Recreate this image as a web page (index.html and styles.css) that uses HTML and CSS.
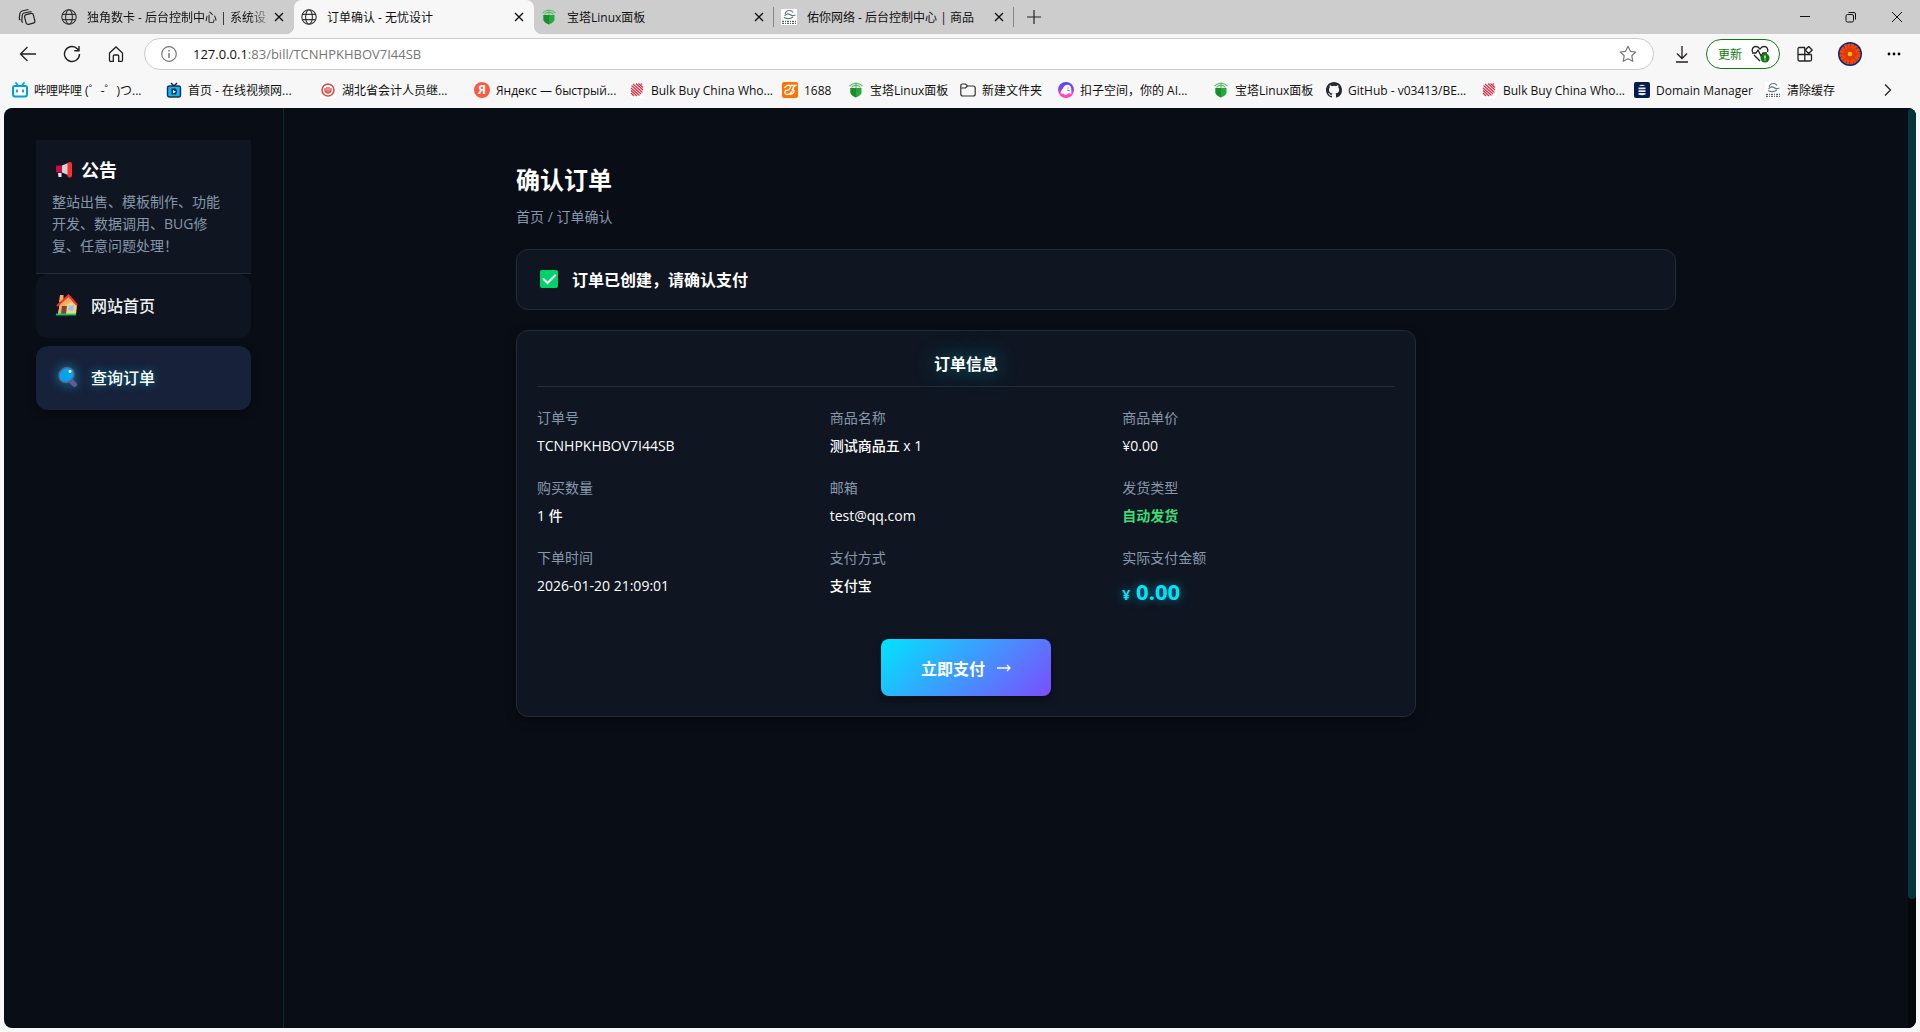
FILE: index.html
```html
<!DOCTYPE html>
<html lang="zh-CN">
<head>
<meta charset="utf-8">
<title>订单确认 - 无忧设计</title>
<link rel="stylesheet" href="styles.css">
</head>
<body>
<svg class="defs" aria-hidden="true">
  <symbol id="globe" viewBox="0 0 16 16"><g fill="none" stroke="#333" stroke-width="1.1"><circle cx="8" cy="8" r="7.2"/><ellipse cx="8" cy="8" rx="3.4" ry="7.2"/><path d="M1.4 5.4h13.2M1.4 10.6h13.2"/></g></symbol>
  <symbol id="close" viewBox="0 0 16 16"><path d="M4 4l8 8M12 4l-8 8" fill="none" stroke="#111" stroke-width="1.4"/></symbol>
  <symbol id="bt" viewBox="0 0 16 16"><path d="M2.500 6H13.500V11Q12.500 13.500 8 15.500Q3.500 13.500 2.500 11Z" fill="#27a83f"/><path d="M8 6V15.500Q3.500 13.500 2.500 11V6Z" fill="#178f2f"/><path d="M1.500 4.200Q4 1.500 8 1.200Q12 1.500 14.500 4.200M3.500 5.500Q5.500 3 8 3.500Q10.500 3 12.500 5.500M8 1v5" fill="none" stroke="#62bd74" stroke-width="1.200"/></symbol>
  <symbol id="yn" viewBox="0 0 16 16"><path fill="#fff" d="M0 0h16v16H0z"/><path d="M4 5Q5 1.500 8.500 1.500Q11 1.500 12 3.500M3.500 7Q6 3.500 9 5.500Q11 7.500 14.500 6M3 8.500Q8 11 12 8" fill="none" stroke="#607786" stroke-width="1.200"/><path d="M1 12.300h14M1 14.300h14" stroke="#56626c" stroke-width="1.200" stroke-dasharray="2 1 1 1"/></symbol>
  <symbol id="bulk" viewBox="0 0 16 16"><rect width="16" height="16" rx="3" fill="#fff"/><path d="M3 2.500l1-1M2 5.500L6.500 1.500M2 8L9 1.500M2.500 10.500L12 2M4 12l9.500-8.500M5.500 13.500L14 6M8 14l6-5.500M11 14l3-3" transform="matrix(-1 0 0 1 16 0)" stroke="#e3213b" stroke-width="1.100"/></symbol>
</svg>

<header class="browser">
  <div class="tabstrip">
    <button class="icon-btn tab-menu" aria-label="标签操作"><svg width="18" height="18" viewBox="0 0 18 18" fill="none" stroke="#222" stroke-width="1.200"><rect x="7" y="6" width="9" height="10" rx="2" transform="rotate(-14 11 10)"/><path d="M5 14.500Q3.500 14 3.800 12L4.300 7Q4.500 5.500 6 5L13.500 3.500M2.500 12Q1 11.500 1.300 9.500L2 5Q2.300 3.500 4 3L10.500 1.500"/></svg></button>
    <div class="tab tab-first"><svg class="fav"><use href="#globe"/></svg><span class="tab-title fade">独角数卡 - 后台控制中心 | 系统设</span><button class="icon-btn" aria-label="关闭"><svg class="fav"><use href="#close"/></svg></button></div>
    <div class="tab active"><svg class="fav"><use href="#globe"/></svg><span class="tab-title">订单确认 - 无忧设计</span><button class="icon-btn" aria-label="关闭"><svg class="fav"><use href="#close"/></svg></button></div>
    <div class="tab ruled"><svg class="fav"><use href="#bt"/></svg><span class="tab-title">宝塔Linux面板</span><button class="icon-btn" aria-label="关闭"><svg class="fav"><use href="#close"/></svg></button></div>
    <div class="tab ruled"><svg class="fav"><use href="#yn"/></svg><span class="tab-title">佑你网络 - 后台控制中心 | 商品</span><button class="icon-btn" aria-label="关闭"><svg class="fav"><use href="#close"/></svg></button></div>
    <button class="icon-btn new-tab" aria-label="新标签页"><svg width="14" height="14" viewBox="0 0 14 14"><path d="M7 0v14M0 7h14" stroke="#222" stroke-width="1.200"/></svg></button>
    <div class="window-controls">
      <button class="icon-btn" aria-label="最小化"><svg width="12" height="12"><path d="M1 5.500h10" stroke="#111"/></svg></button>
      <button class="icon-btn" aria-label="还原"><svg width="12" height="12" fill="none" stroke="#111"><rect x="1" y="3.500" width="7.500" height="7.500" rx="1.500"/><path d="M3.500 1.500H9Q10.500 1.500 10.500 3V8.500"/></svg></button>
      <button class="icon-btn" aria-label="关闭窗口"><svg width="12" height="12"><path d="M1 1l10 10M11 1L1 11" stroke="#111"/></svg></button>
    </div>
  </div>

  <div class="toolbar">
    <div class="nav-buttons">
      <button class="icon-btn" aria-label="后退"><svg width="18" height="18" viewBox="0 0 18 18" fill="none" stroke="#222" stroke-width="1.300"><path d="M17 9H2M8.500 2L1.500 9l7 7"/></svg></button>
      <button class="icon-btn" aria-label="刷新"><svg width="18" height="18" viewBox="0 0 18 18" fill="none" stroke="#222" stroke-width="1.400"><path d="M16.500 9A7.500 7.500 0 1 1 14.500 3.900L16 5.500M16 1v4.700h-4.700"/></svg></button>
      <button class="icon-btn" aria-label="主页"><svg width="18" height="18" viewBox="0 0 18 18" fill="none" stroke="#222" stroke-width="1.300"><path d="M2.500 8L9 2l6.500 6v7.500q0 .8-.8.800h-3V11q0-1-1-1H7.300q-1 0-1 1v5.300h-3q-.8 0-.8-.8z"/></svg></button>
    </div>
    <div class="address">
      <svg width="16" height="16" viewBox="0 0 16 16" fill="none" stroke="#777" stroke-width="1.200"><circle cx="8" cy="8" r="7.300"/><path d="M8 7v5M8 4v1.500" stroke-width="1.500"/></svg>
      <span class="url"><b>127.0.0.1</b>:83/bill/TCNHPKHBOV7I44SB</span>
      <svg width="18" height="18" viewBox="0 0 18 18" fill="none" stroke="#777" stroke-width="1.200" stroke-linejoin="round"><path d="M9 1.300l2.400 5 5.400.7-4 3.800 1 5.500L9 13.700l-4.800 2.600 1-5.500-4-3.800 5.400-.7z"/></svg>
    </div>
    <div class="tools">
      <button class="icon-btn" aria-label="下载"><svg width="14" height="18" viewBox="0 0 14 18" fill="none" stroke="#222" stroke-width="1.300"><path d="M7 1v12M2 8.500l5 5 5-5M1 17h12"/></svg></button>
      <button class="update">更新<svg width="19" height="18" viewBox="0 0 19 18" fill="none" stroke="#222" stroke-width="1.300"><path d="M1.500 7C.5 4 2 1.500 5 1.500Q7.500 1.500 9 4Q10.500 1.500 13 1.500C16 1.500 17.500 4 16.500 7M3 10l6 6M1 8h4l2-3 3 6 2-3h4"/><circle cx="14" cy="13" r="4.500" fill="#0f7b10" stroke="none"/><path d="M14 10.500v3M14 14.500v1" stroke="#fff"/></svg></button>
      <button class="icon-btn" aria-label="扩展"><svg width="16" height="16" viewBox="0 0 16 16" fill="none" stroke="#222" stroke-width="1.300"><path d="M8 1.500H2.500Q1 1.500 1 3V13.500Q1 15 2.500 15H13Q14.500 15 14.500 13.500V8.500M1 8.500H14.500M7.800 1.500V15"/><path d="M11.700 0.500l3.500 3.500-3.500 3.500-3.500-3.500z" fill="#f7f7f7" stroke-linejoin="round"/></svg></button>
      <button class="icon-btn avatar" aria-label="个人资料"><svg width="24" height="24" viewBox="0 0 24 24"><circle cx="12" cy="12" r="12" fill="#0b2380"/><circle cx="12" cy="12" r="8" fill="#e63b05"/><circle cx="12" cy="12" r="8.500" fill="none" stroke="#f0480e" stroke-width="4" stroke-dasharray="3 .4"/><path d="M12 3v18M3 12h18M6 6l12 12M18 6L6 18" stroke="#c93000" stroke-width=".7"/><circle cx="12" cy="12" r="2.300" fill="#ffc400"/></svg></button>
      <button class="icon-btn" aria-label="更多"><svg width="14" height="4"><circle cx="2" cy="2" r="1.400"/><circle cx="7" cy="2" r="1.400"/><circle cx="12" cy="2" r="1.400"/></svg></button>
    </div>
  </div>

  <nav class="bookmarks" aria-label="收藏夹">
    <a href="#"><svg class="fav" viewBox="0 0 16 16"><path d="M4 1l2.500 3M12 1L9.500 4" stroke="#00a1d6" stroke-width="1.800" stroke-linecap="round"/><rect x="1" y="4" width="14" height="10.500" rx="2" fill="#fff" stroke="#00a1d6" stroke-width="2"/><path d="M5 7.500v3M11 7.500v3" stroke="#00a1d6" stroke-width="1.800"/></svg>哔哩哔哩 (゜-゜)つ...</a>
    <a href="#"><svg class="fav" viewBox="0 0 16 16"><path d="M5 1l3 3 3-3" fill="none" stroke="#222" stroke-width="1.500"/><rect x="1.500" y="4" width="13" height="11" rx="2" fill="#12b0ff" stroke="#143349" stroke-width="1.400"/><path d="M5.500 6.500h4.500l1 3-1 3H5.500z" fill="#173246"/><path d="M7 8l3 1.700L7 11.400z" fill="#fff"/></svg>首页 - 在线视频网...</a>
    <a href="#"><svg class="fav" viewBox="0 0 16 16"><path fill="#fff" d="M0 0h16v16H0z"/><circle cx="8" cy="8" r="6" fill="none" stroke="#dc4b40" stroke-width="1.600"/><path d="M5 6v3q3 4 6 0V6M7 5v5M9 5v5" fill="none" stroke="#dc4b40" stroke-width="1.300"/></svg>湖北省会计人员继...</a>
    <a href="#"><span class="ya">Я</span>Яндекс — быстрый...</a>
    <a href="#"><svg class="fav"><use href="#bulk"/></svg>Bulk Buy China Who...</a>
    <a href="#"><svg class="fav" viewBox="0 0 16 16"><rect width="16" height="16" rx="2" fill="#ff7300"/><path d="M2.500 6Q5 2.500 8 3.500Q9.500 5 7 7.500Q5 9 3.500 8.500Q2 12.500 5.500 12.500Q8.500 12 10.500 8.500M9 3.500H13.500Q11 5 10.500 7.500Q13 8 11.500 10.500Q10 13 7.500 12" fill="none" stroke="#fff" stroke-width="1.400"/></svg>1688</a>
    <a href="#"><svg class="fav"><use href="#bt"/></svg>宝塔Linux面板</a>
    <a href="#"><svg class="fav" viewBox="0 0 16 16" fill="none" stroke="#333" stroke-width="1.200"><path d="M.8 4Q.8 2 2.800 2H5.500L7.500 4H13.200Q15.200 4 15.200 6V12Q15.200 14 13.200 14H2.800Q.8 14 .8 12ZM.8 6H5.500L7.500 4"/></svg>新建文件夹</a>
    <a href="#"><svg class="fav" viewBox="0 0 16 16"><defs><linearGradient id="coze" x2="0" y2="1"><stop stop-color="#4b48f5"/><stop offset=".5" stop-color="#8d48f0"/><stop offset=".75" stop-color="#ff45c8"/></linearGradient></defs><circle cx="8" cy="8" r="8" fill="url(#coze)"/><path d="M2.500 11Q2.500 9 5 6.500Q6.500 2.500 10 2.800Q13.500 3.500 13.300 8V12Q11 10.500 9.500 12Q7 14 5.500 11.500Q4 12 2.500 11Z" fill="#fff"/><path d="M9.500 6h1M9.500 8.500h2" stroke="#6a48f3" stroke-width="1.200"/></svg>扣子空间，你的 AI...</a>
    <a href="#"><svg class="fav"><use href="#bt"/></svg>宝塔Linux面板</a>
    <a href="#"><svg class="fav" viewBox="0 0 16 16"><path fill="#24292f" d="M8 0C3.580 0 0 3.580 0 8c0 3.540 2.290 6.530 5.470 7.590.4.070.55-.17.55-.38 0-.19-.01-.82-.01-1.490-2.010.37-2.530-.49-2.690-.94-.09-.23-.48-.94-.82-1.130-.28-.15-.68-.52-.01-.53.63-.01 1.080.58 1.230.82.72 1.210 1.870.87 2.330.66.070-.52.280-.87.510-1.070-1.780-.2-3.640-.89-3.640-3.950 0-.87.310-1.590.82-2.150-.08-.2-.36-1.020.08-2.120 0 0 .67-.21 2.200.82a7.600 7.600 0 0 1 4 0c1.530-1.040 2.200-.82 2.200-.82.44 1.100.16 1.920.08 2.120.51.56.82 1.270.82 2.150 0 3.070-1.870 3.750-3.650 3.950.29.25.54.73.54 1.480 0 1.070-.01 1.930-.01 2.200 0 .21.15.46.55.38A8.010 8.010 0 0 0 16 8c0-4.420-3.580-8-8-8z"/></svg>GitHub - v03413/BE...</a>
    <a href="#"><svg class="fav"><use href="#bulk"/></svg>Bulk Buy China Who...</a>
    <a href="#"><svg class="fav" viewBox="0 0 16 16"><rect width="16" height="16" rx="2" fill="#061b50"/><path d="M5 4q3-2.500 6 0zM4.500 5.500h7v1.800h-7zM4.500 8.200h7V10h-7zM4.500 10.900h7v1.600q-3.500 1.500-7 0z" fill="#e8edf5"/></svg>Domain Manager</a>
    <a href="#"><svg class="fav"><use href="#yn"/></svg>清除缓存</a>
    <button class="icon-btn more" aria-label="更多收藏"><svg width="8" height="14" viewBox="0 0 8 14"><path d="M1 1.500L6.500 7 1 12.500" fill="none" stroke="#222" stroke-width="1.300"/></svg></button>
  </nav>
</header>

<div class="page">
  <aside class="sidebar">
    <section class="notice">
      <h2><svg width="18" height="18" viewBox="0 0 18 18"><path d="M1 5.500Q1 4.500 2 4.500H7V11.500H2Q1 11.500 1 10.500Z" fill="#ca0b4a"/><path d="M7 4.500L13 2V14L7 11.500Z" fill="#d3d3d3"/><rect x="12.500" y="1" width="4.500" height="15.500" rx="2" fill="#f8312f"/><path d="M3 12h3.500v4h-3z" fill="#e6e6e6"/></svg>公告</h2>
      <p>整站出售、模板制作、功能开发、数据调用、BUG修复、任意问题处理！</p>
    </section>
    <nav class="menu">
      <a href="#"><svg width="24" height="24" viewBox="0 0 24 24"><path d="M5 2h3.500v7H4z" fill="#f3ad61"/><path d="M5 10l10-7 7 9-1 9H3z" fill="#ffce7c"/><path d="M5 10L15 3l1 6-6 4-1 8H3z" fill="#f3ad61"/><path d="M2 13L13.500 2.500 22 12" fill="none" stroke="#f8312f" stroke-width="2.200"/><path d="M7 13h5l-1 8H6z" fill="#7d4533"/><path d="M14 13l5-1-1 6-5-1z" fill="#83cbff"/><path d="M1 21.500h20" stroke="#00d26a" stroke-width="1.800"/></svg>网站首页</a>
      <a href="#" class="current"><svg width="24" height="24" viewBox="0 0 24 24"><path d="M14.500 14.500l5 5" stroke="#635994" stroke-width="5" stroke-linecap="round"/><ellipse cx="11.500" cy="10" rx="8" ry="7" transform="rotate(-40 11.500 10)" fill="#00a6ed" stroke="#635994" stroke-width="1.500"/><circle cx="15" cy="6.500" r="1.400" fill="#fff"/></svg>查询订单</a>
    </nav>
  </aside>

  <main class="content">
    <div class="inner">
      <h1>确认订单</h1>
      <p class="crumbs"><a href="#">首页</a> / 订单确认</p>

      <div class="alert" role="status"><svg width="18" height="18" viewBox="0 0 18 18"><rect width="18" height="18" rx="2" fill="#00d26a"/><path d="M3.500 9l4 4L15 5.500" fill="none" stroke="#fff" stroke-width="2" stroke-linecap="round"/></svg>订单已创建，请确认支付</div>

      <section class="order">
        <h2>订单信息</h2>
        <dl>
          <div><dt>订单号</dt><dd>TCNHPKHBOV7I44SB</dd></div>
          <div><dt>商品名称</dt><dd>测试商品五 x 1</dd></div>
          <div><dt>商品单价</dt><dd>¥0.00</dd></div>
          <div><dt>购买数量</dt><dd>1 件</dd></div>
          <div><dt>邮箱</dt><dd>test@qq.com</dd></div>
          <div><dt>发货类型</dt><dd class="auto">自动发货</dd></div>
          <div><dt>下单时间</dt><dd>2026-01-20 21:09:01</dd></div>
          <div><dt>支付方式</dt><dd>支付宝</dd></div>
          <div><dt>实际支付金额</dt><dd class="total"><small>¥</small> 0.00</dd></div>
        </dl>
        <button class="pay">立即支付<svg width="14" height="8" viewBox="0 0 14 8"><path d="M0 4h13M10 1l3 3-3 3" fill="none" stroke="#fff" stroke-width="1.300"/></svg></button>
      </section>
    </div>
  </main>
  <div class="scrollbar"><div class="thumb"></div></div>
</div>
</body>
</html>
```
FILE: styles.css
```css
* { box-sizing: border-box; }

body {
  margin: 0;
  min-height: 100vh;
  display: flex;
  flex-direction: column;
  background: #f7f7f7;
  color: #111;
  font-family: "Open Sans", "Noto Sans CJK SC", sans-serif;
  font-size: 14px;
}

h1, h2, p, dl, dd { margin: 0; }
a { color: inherit; text-decoration: none; }
button { font: inherit; cursor: pointer; }
svg { flex: none; display: block; }

.defs { position: absolute; width: 0; height: 0; }
.fav { width: 16px; height: 16px; flex: none; }

.icon-btn {
  display: grid;
  place-items: center;
  padding: 0;
  border: 0;
  background: none;
}

/* Tab strip */
.browser { font-size: 12px; }

.tabstrip {
  display: flex;
  align-items: stretch;
  height: 34px;
  background: #cdcdcd;
}

.tab-menu { width: 54px; }

.tab {
  display: flex;
  align-items: center;
  gap: 10px;
  width: 240px;
  padding: 0 7px;
}

.tab-first .icon-btn { margin-left: -12px; }
.tab-title { flex: 1; white-space: nowrap; }

.fade {
  -webkit-mask-image: linear-gradient(to right, #000 88%, transparent);
  mask-image: linear-gradient(to right, #000 88%, transparent);
}

.tab.active {
  position: relative;
  background: #f7f7f7;
  border-radius: 8px 8px 0 0;
}

.tab.active::before,
.tab.active::after {
  content: "";
  position: absolute;
  bottom: 0;
  width: 8px;
  height: 8px;
}

.tab.active::before {
  right: 100%;
  background: radial-gradient(circle at 0 0, #cdcdcd 8px, #f7f7f7 8px);
}

.tab.active::after {
  left: 100%;
  background: radial-gradient(circle at 100% 0, #cdcdcd 8px, #f7f7f7 8px);
}

.ruled {
  background: linear-gradient(#888, #888) right center / 1px 20px no-repeat;
}

.new-tab { width: 40px; }
.window-controls { display: flex; margin-left: auto; }
.window-controls .icon-btn { width: 46px; }

/* Toolbar */
.toolbar {
  display: flex;
  align-items: center;
  height: 40px;
}

.nav-buttons { display: flex; padding-left: 6px; width: 144px; }
.nav-buttons .icon-btn { width: 44px; height: 32px; }

.address {
  flex: 1;
  display: flex;
  align-items: center;
  gap: 16px;
  height: 32px;
  padding: 0 16px;
  border: 1px solid #ccc;
  border-radius: 16px;
  background: #fff;
}

.url { flex: 1; font-size: 13px; color: #767676; }
.url b { font-weight: 400; color: #111; }

.tools {
  display: flex;
  align-items: center;
  gap: 17px;
  width: 266px;
  padding-left: 21px;
}

.avatar { margin: 0 8px; }

.update {
  display: flex;
  align-items: center;
  gap: 9px;
  height: 30px;
  padding: 0 9px 0 11px;
  border: 1px solid #0f7b10;
  border-radius: 15px;
  background: #fff;
  color: #0f7b10;
}

/* Bookmarks */
.bookmarks {
  display: grid;
  grid-template-columns:
    154px 154px 154px 155px 153px 66px 112px 98px
    155px 113px 155px 153px 131px 90px 1fr;
  align-items: center;
  height: 34px;
  padding: 0 0 2px 12px;
}

.bookmarks a { display: flex; align-items: center; gap: 6px; white-space: nowrap; }
.more { padding: 4px; justify-self: center; }

.ya {
  width: 16px;
  height: 16px;
  border-radius: 8px;
  background: #fc5b43;
  color: #fff;
  font-weight: 700;
  line-height: 16px;
  text-align: center;
}

/* Site */
.page {
  flex: 1;
  display: flex;
  margin: 0 4px 4px;
  border-radius: 8px;
  overflow: hidden;
  background: #090d15;
  color: #fff;
}

.sidebar {
  width: 280px;
  padding: 32px;
  border-right: 1px solid #0a2a35;
}

.notice {
  padding: 16px 24px 16px 16px;
  border-bottom: 1px solid #252c38;
  background: #0f1622;
}

.notice h2 {
  display: flex;
  align-items: center;
  gap: 8px;
  padding-left: 3px;
  margin-bottom: 7px;
  font-size: 18px;
  line-height: 28px;
}

.notice p { color: #8896ab; line-height: 22px; }

.menu { display: grid; gap: 8px; }

.menu a {
  display: flex;
  align-items: center;
  gap: 12px;
  height: 64px;
  padding: 0 19px 2px;
  border-radius: 12px;
  background: #0f1520;
  color: #f1f3f6;
  font-size: 16px;
  font-weight: 500;
}

.menu .current {
  background: #17213a;
  box-shadow: 0 4px 8px rgba(0, 0, 0, .3);
  color: #fff;
  text-shadow: 0 0 10px rgba(0, 229, 255, .5);
}

.menu .current svg { filter: drop-shadow(0 0 6px rgba(0, 229, 255, .5)); }

.content { flex: 1; padding: 54px 40px; }
.inner { max-width: 1160px; margin: 0 auto; }

h1 { font-size: 24px; line-height: 36px; }
.crumbs { margin: 8px 0 21px; line-height: 22px; color: #8896ab; }

.alert {
  display: flex;
  align-items: center;
  gap: 14px;
  height: 61px;
  padding: 0 23px 2px;
  border: 1px solid #242b37;
  border-radius: 12px;
  background: #0f1622;
  font-size: 16px;
  font-weight: 700;
}

.order {
  max-width: 900px;
  margin-top: 20px;
  padding: 20px;
  border: 1px solid #242b37;
  border-radius: 12px;
  background: #0f1622;
  box-shadow: 0 4px 12px rgba(0, 0, 0, .3);
}

.order h2 {
  padding-bottom: 9px;
  border-bottom: 1px solid #262d38;
  font-size: 16px;
  line-height: 26px;
  text-align: center;
  text-shadow: 0 0 20px rgba(0, 229, 255, .5);
}

.order dl {
  display: grid;
  grid-template-columns: repeat(3, 1fr);
  gap: 20px;
  padding: 20px 0 28px;
}

.order dt { margin-bottom: 6px; line-height: 22px; color: #8896ab; }
.order dd { line-height: 22px; font-weight: 500; }
.order .auto { color: #3ddc75; font-weight: 700; }

.order .total {
  color: #00e5ff;
  font-size: 22px;
  font-weight: 700;
  line-height: 32px;
  text-shadow: 0 0 10px rgba(0, 229, 255, .5);
}

.total small { font-size: 14px; }

.pay {
  display: flex;
  align-items: center;
  gap: 12px;
  height: 57px;
  margin: 0 auto;
  padding: 0 40px;
  border: 0;
  border-radius: 8px;
  background: linear-gradient(135deg, #00e5ff, #7c4dff);
  box-shadow: 0 4px 8px rgba(0, 0, 0, .4);
  color: #fff;
  font-size: 16px;
  font-weight: 700;
}

.scrollbar { width: 8px; background: #04080b; }
.thumb { height: 86%; border-radius: 4px; background: #04343c; }
```
